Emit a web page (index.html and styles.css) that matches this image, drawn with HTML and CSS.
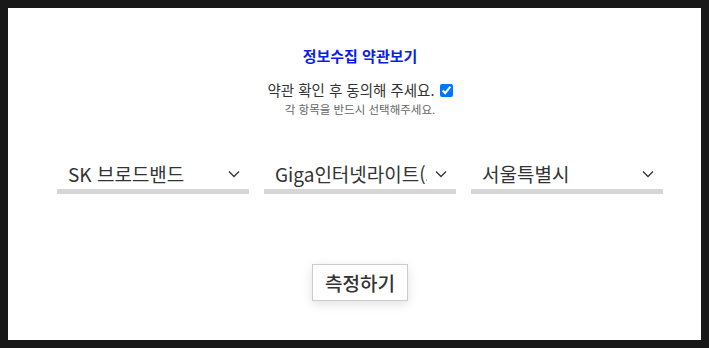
FILE: index.html
```html
<!DOCTYPE html>
<html lang="ko">
	<head>
		<meta charset="UTF-8">
		<meta name="viewport" content="width=device-width, initial-scale=1.0">
		<title>속도 측정</title>
		<link rel="stylesheet" href="styles.css">
	</head>
	<body>
		<div class="panel">
			<!-- 약관 -->
			<div class="terms">
				<a href="#terms" class="terms-link">정보수집 약관보기</a>
				<label class="agree">약관 확인 후 동의해 주세요. <input type="checkbox" checked></label>
				<p class="notice">각 항목을 반드시 선택해주세요.</p>
			</div>

			<!-- 선택 항목 -->
			<div class="selects">
				<div class="select">
					<span class="select-text">SK 브로드밴드</span>
					<svg class="chevron" width="12" height="8" viewBox="0 0 12 8"><path d="M1 1.5 L6 6.5 L11 1.5" fill="none" stroke="#333" stroke-width="1.3"/></svg>
				</div>
				<div class="select">
					<span class="select-text">Giga인터넷라이트(500M)</span>
					<svg class="chevron" width="12" height="8" viewBox="0 0 12 8"><path d="M1 1.5 L6 6.5 L11 1.5" fill="none" stroke="#333" stroke-width="1.3"/></svg>
				</div>
				<div class="select">
					<span class="select-text">서울특별시</span>
					<svg class="chevron" width="12" height="8" viewBox="0 0 12 8"><path d="M1 1.5 L6 6.5 L11 1.5" fill="none" stroke="#333" stroke-width="1.3"/></svg>
				</div>
			</div>

			<div class="actions">
				<button class="measure-btn">측정하기</button>
			</div>
		</div>
	</body>
</html>
```

FILE: styles.css
```css
body {
	margin: 0;
	padding: 8px;
	height: 348px;
	box-sizing: border-box;
	background: #181818;
	font-family: "Noto Sans CJK KR", "Noto Sans", sans-serif;
	color: #333;
	overflow: hidden;
}

.panel {
	background: #fff;
	height: 332px;
	box-sizing: border-box;
	padding: 38px 38px 0 49px;
}

.terms {
	display: flex;
	flex-direction: column;
	align-items: center;
}

.terms-link {
	color: #0a1ee6;
	font-size: 15px;
	font-weight: bold;
	text-decoration: none;
	line-height: 20px;
}

.agree {
	margin-top: 14px;
	font-size: 14.5px;
	line-height: 20px;
	display: flex;
	align-items: center;
	gap: 1px;
}

.agree input {
	margin: 0 0 0 4px;
	width: 13px;
	height: 13px;
}

.notice {
	margin: 1px 0 0;
	font-size: 11.5px;
	color: #666;
	line-height: 16px;
}

.selects {
	display: flex;
	gap: 15px;
	margin-top: 42px;
}

.select {
	flex: 1;
	min-width: 0;
	display: flex;
	align-items: center;
	height: 30px;
	padding: 0 9px 0 11px;
	border-bottom: 5px solid #d6d6d6;
}

.select-text {
	flex: 1;
	min-width: 0;
	font-size: 19px;
	white-space: nowrap;
	overflow: hidden;
	margin-right: 8px;
	line-height: 30px;
}

.chevron {
	flex: none;
}

.actions {
	display: flex;
	justify-content: center;
	margin-top: 70px;
}

.measure-btn {
	font-family: inherit;
	font-size: 19px;
	font-weight: 500;
	color: #333;
	background: #fff;
	border: 1px solid #ccc;
	padding: 0 10px;
	height: 37px;
	width: 96px;
	box-shadow: 0 3px 10px rgba(0, 0, 0, 0.12);
}
```
